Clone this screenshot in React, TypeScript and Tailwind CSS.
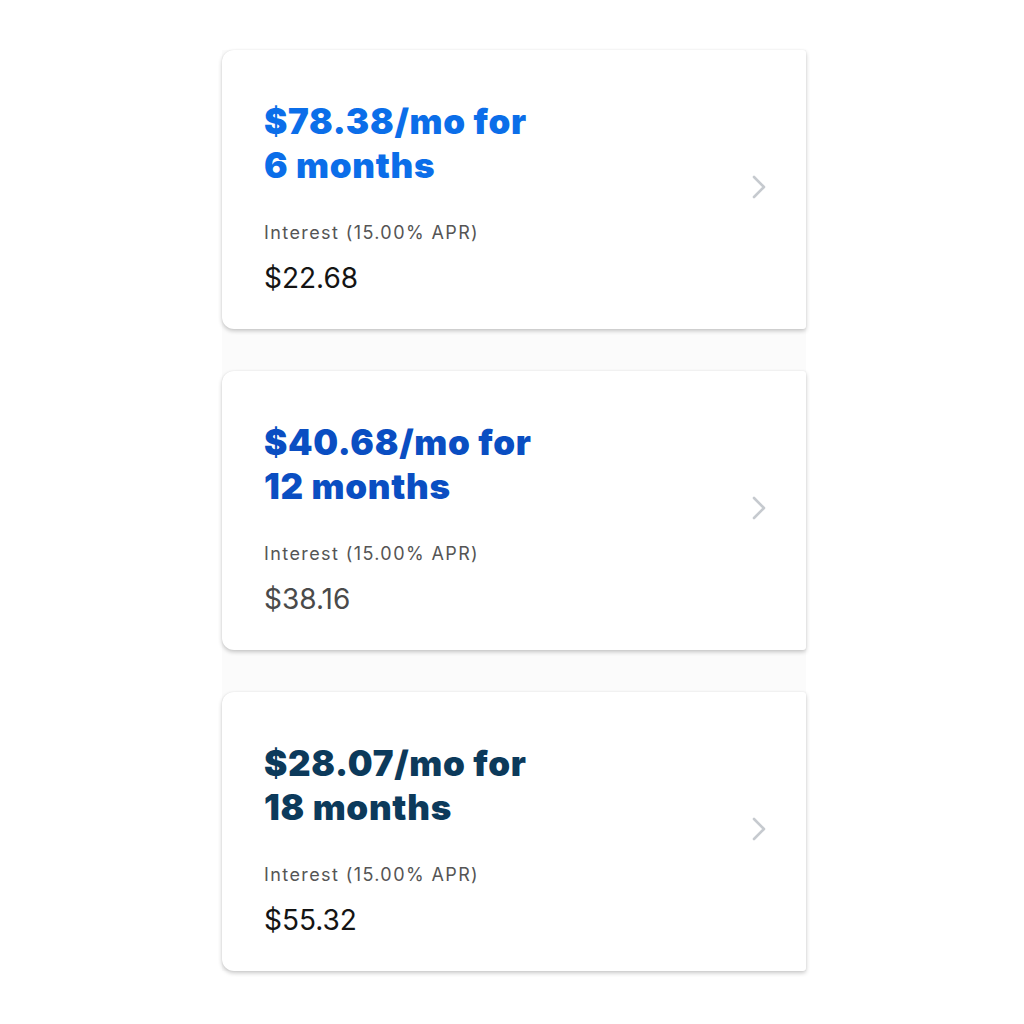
import React from 'react';

type Plan = {
  monthly: string;
  months: string;
  interest: string;
  headColor: string;
  amountColor: string;
};

const plans: Plan[] = [
  { monthly: '$78.38/mo for', months: '6 months', interest: '$22.68', headColor: 'text-[#0b6ee9]', amountColor: 'text-[#141414]' },
  { monthly: '$40.68/mo for', months: '12 months', interest: '$38.16', headColor: 'text-[#0a4ec2]', amountColor: 'text-[#4a4a4a]' },
  { monthly: '$28.07/mo for', months: '18 months', interest: '$55.32', headColor: 'text-[#0c3a5b]', amountColor: 'text-[#141414]' },
];

const Chevron = () => (
  <svg width="18" height="26" viewBox="0 0 18 26" fill="none" className="text-[#c6cacf]">
    <path d="M4 3l10 10-10 10" stroke="currentColor" strokeWidth="2.6" strokeLinecap="round" strokeLinejoin="round" />
  </svg>
);

const PlanCard: React.FC<{ plan: Plan }> = ({ plan }) => (
  <div className="h-[279px] bg-white rounded-l-[12px] rounded-r-[3px] shadow-[0_2px_4px_rgba(0,0,0,0.22),0_0_2px_rgba(0,0,0,0.06)] flex items-start justify-between pl-[42px] pr-[38px] pt-[49px]">
    <div className="flex flex-col">
      <h3 className={`font-['Inter',sans-serif] font-black text-[35px] leading-[44px] tracking-[0.7px] ${plan.headColor}`}>
        {plan.monthly}
        <br />
        {plan.months}
      </h3>
      <p className="mt-[35px] font-['Inter',sans-serif] text-[18px] leading-[22px] tracking-[1.4px] text-[#555]">
        Interest (15.00% APR)
      </p>
      <p className={`mt-[17px] font-['Inter',sans-serif] font-normal text-[28px] leading-[34px] tracking-[0px] ${plan.amountColor}`}>
        {plan.interest}
      </p>
    </div>
    <div className="self-center -mt-[55px]">
      <Chevron />
    </div>
  </div>
);

export default function App() {
  return (
    <div className="min-h-[1024px] w-[1024px] bg-white pt-[50px]">
      <div className="ml-[222px] w-[584px] bg-[#fbfbfb] flex flex-col gap-[42px]">
        {plans.map((p) => (
          <PlanCard key={p.months} plan={p} />
        ))}
      </div>
    </div>
  );
}
